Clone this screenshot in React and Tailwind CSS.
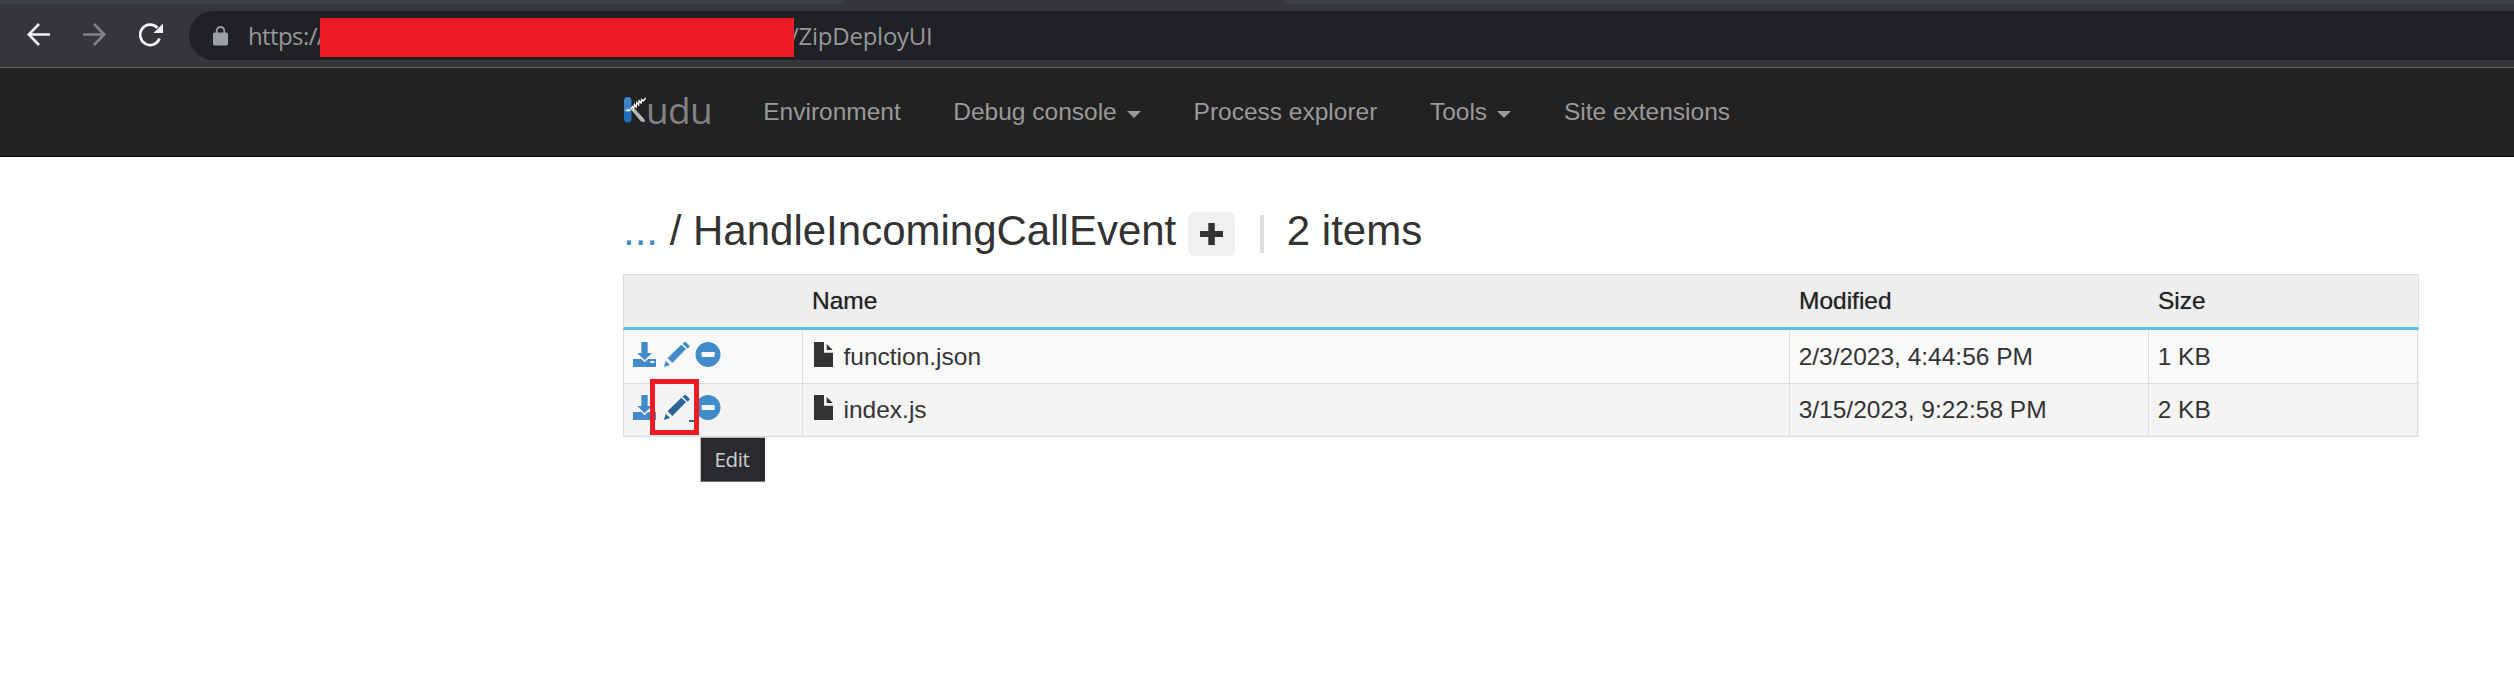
import React from "react";

const COLUMNS = "grid grid-cols-[180px_987px_359px_269px]";

function DownloadIcon() {
  return (
    <svg className="block h-[25px] w-[23px]" viewBox="0 0 69 75" fill="currentColor">
      <path d="M25 0h19v33h13L35 55 13 33h12z" />
      <path d="M0 51h25l10 10 10-10h24v24H0z" />
      <path d="M52 57h12v6H52z" fill="#f9f9f9" />
    </svg>
  );
}

function PencilIcon() {
  return (
    <svg className="block h-[25px] w-[26px]" viewBox="0 0 78 75" fill="currentColor">
      <path d="M0 75l5-19 13 13z" />
      <path d="M11 48L52 8l14 13-41 42z" />
      <path d="M56 5l4-4q3-2 6 0l9 9q3 3 0 6l-4 4z" />
    </svg>
  );
}

function MinusIcon() {
  return (
    <svg className="block h-[25px] w-[26px]" viewBox="0 0 76 75" fill="currentColor">
      <path fillRule="evenodd" d="M38 0a37.5 37.5 0 1 1 0 75a37.5 37.5 0 1 1 0-75zM19 30v15h39V30z" />
    </svg>
  );
}

function FileIcon() {
  return (
    <svg className="block h-[25px] w-[19px]" viewBox="0 0 57 75" fill="#333">
      <path d="M0 0h30v32h27v43H0z" />
      <path d="M38 6l18 18H38z" />
    </svg>
  );
}

function Logo() {
  return (
    <div className="flex h-[88px] w-[114px] shrink-0 items-start">
      <svg className="mt-[28px] block h-[27px] w-[24px] shrink-0" viewBox="0 0 24 27">
        <defs>
          <linearGradient id="handle" x1="0" y1="0" x2="0" y2="1">
            <stop offset="0.55" stopColor="#3b86c8" />
            <stop offset="0.55" stopColor="#1f70b8" />
          </linearGradient>
        </defs>
        <path d="M7.500 13l4-.5 9 9.700q1.500 1.500 1.500 3.800l-4-.6z" fill="#b5b6b8" />
        <rect x="1" y="1" width="7.500" height="25.500" rx="3.700" fill="url(#handle)" />
        <path d="M2.200 15.200q.3-1.200 1.600-1.200q.7-1.500 2-.7q1.500.2 2 1.900z" fill="#fff" />
        <path
          d="M7.500 13.500l2-3 1 2.400 1-4.600 1.600 2.700.7-4.600 1.800 2.500.5-4.200 2 2.300.6-3.500 1.700 1.500 2.200-3"
          fill="none"
          stroke="#fff"
          strokeWidth="1.300"
        />
      </svg>
      <span className="mt-[17px] -ml-px font-['Open_Sans',sans-serif] text-[37px] leading-[50px] tracking-[-0.7px] text-[#808285]">
        udu
      </span>
    </div>
  );
}

function NavItem({ label, caret }) {
  return (
    <div className="flex shrink-0 items-center px-[26.25px]">
      <span>{label}</span>
      {caret && (
        <svg className="mt-[3px] ml-[10.3px] block h-[7px] w-[14px]" viewBox="0 0 14 7" fill="#999">
          <path d="M0 0h14L7 7z" />
        </svg>
      )}
    </div>
  );
}

function BrowserBar() {
  return (
    <div className="flex h-[68px] flex-col border-b border-[#5f6062] bg-[#35363a]">
      <div className="flex h-1 shrink-0 justify-between">
        <div className="w-[845px] rounded-br-[6px] bg-[#3c4043]" />
        <div className="w-[1230px] rounded-bl-[6px] bg-[#3c4043]" />
      </div>
      <div className="mt-[7px] flex h-[49px] shrink-0">
        <div className="flex w-[189px] shrink-0 pt-3 pl-[27px]">
          <svg className="block h-[23px] w-[23px]" viewBox="0 0 23 23" fill="none" stroke="#f1f3f4" strokeWidth="2.600">
            <path d="M23 11.500H2M12 1L1.700 11.500L12 22" />
          </svg>
          <svg className="ml-[33px] block h-[23px] w-[23px]" viewBox="0 0 23 23" fill="none" stroke="#828387" strokeWidth="2.600">
            <path d="M0 11.500H21M11 1l10.300 10.500L11 22" />
          </svg>
          <svg className="ml-[33px] block h-[24px] w-[24px]" viewBox="0 0 24 24">
            <path d="M20.500 15.500A10 10.200 0 1 1 18.500 4.900" fill="none" stroke="#f1f3f4" strokeWidth="2.700" />
            <path d="M24 .5V10H14.500z" fill="#f1f3f4" />
          </svg>
        </div>
        <div className="flex flex-1 rounded-l-full bg-[#202124] font-['Open_Sans',sans-serif] text-[24px] leading-[33px] whitespace-nowrap text-[#969799]">
          <svg className="mt-[15px] ml-6 block h-5 w-[15px] shrink-0" viewBox="0 0 15 20">
            <path d="M3.700 8V4.800a3.800 3.800 0 0 1 7.600 0V8" fill="none" stroke="#9aa0a6" strokeWidth="1.800" />
            <rect y="6.500" width="15" height="13" rx="1.800" fill="#9aa0a6" />
          </svg>
          <div className="mt-2 ml-5 w-[72px] shrink-0 tracking-[-0.6px]">https://</div>
          <div className="relative mt-[7px] h-[39px] w-[474px] shrink-0 bg-[#ed1c24]" />
          <span className="mt-2 -ml-[4px] shrink-0 tracking-[-0.25px]">/ZipDeployUI</span>
        </div>
      </div>
    </div>
  );
}

function Row({ name, modified, size, editing }) {
  const cell = "border-r border-[#ddd] pl-[8.700px]";
  return (
    <div
      className={`${COLUMNS} border-b border-[#ddd] ${editing ? "h-[53px] bg-[#f4f4f4] leading-[51px]" : "h-[54px] bg-[#f9f9f9] leading-[53px]"}`}
    >
      <div className={`relative flex border-x border-[#ddd] pl-[9px] text-[#428bca] ${editing ? "pt-[11px]" : "pt-3"}`}>
        <DownloadIcon />
        <div className={`ml-2 ${editing ? "text-[#2a6496]" : ""}`}>
          <PencilIcon />
        </div>
        <div className="ml-[5px]">
          <MinusIcon />
        </div>
        {editing && (
          <>
            <div className="absolute top-[-5px] left-[26px] h-[56px] w-[49px] border-[5px] border-[#ed1c24]" />
            <div className="absolute top-[36px] left-[65px] h-[2px] w-[5px] bg-[#2a6496]" />
            <div className="absolute top-[53px] left-[76px] z-10 h-[45px] w-[65px] border-t border-b border-l border-t-[#bbb] border-b-[#777] border-l-[#bbb] bg-[#292a2d] pr-[2px] text-center font-['Open_Sans',sans-serif] text-[20.500px] leading-[43px] tracking-[-0.4px] text-[#cfd0d1]">
              Edit
            </div>
          </>
        )}
      </div>
      <div className="flex border-r border-[#ddd] pl-[11px]">
        <div className={editing ? "pt-[11px]" : "pt-3"}>
          <FileIcon />
        </div>
        <span className="ml-[10.500px]">{name}</span>
      </div>
      <div className={cell}>{modified}</div>
      <div className={cell}>{size}</div>
    </div>
  );
}

export default function App() {
  return (
    <div className="h-[673px] w-[2514px] overflow-hidden bg-white font-['Liberation_Sans',Arial,sans-serif] text-[24.500px] text-[#333]">
      <BrowserBar />
      <nav className="flex h-[89px] border-b border-[#080808] bg-[#222] pl-[623px] text-[#999]">
        <Logo />
        <div className="flex pt-px">
          <NavItem label="Environment" />
          <NavItem label="Debug console" caret />
          <NavItem label="Process explorer" />
          <NavItem label="Tools" caret />
          <NavItem label="Site extensions" />
        </div>
      </nav>
      <main className="pl-[623px]">
        <h1 className="flex h-[117px] pt-[51px] text-[42px] leading-[46px] whitespace-pre">
          <span className="text-[#428bca]">...</span>
          <span> / HandleIncomingCallEvent</span>
          <span className="mt-1 ml-[12px] flex h-[44px] w-[47px] items-center justify-center rounded-[7px] bg-[#efefef]">
            <svg className="block h-[22px] w-[23px]" viewBox="0 0 23 22" fill="#333">
              <path d="M8.300 0h6.500v8H23v6h-8.200v8H8.300v-8H0V8h8.300z" />
            </svg>
          </span>
          <span className="mt-[7px] ml-[25px] h-[38px] w-[3.500px] bg-[#ddd]" />
          <span className="ml-[23px]">2 items</span>
        </h1>
        <div className="w-[1796px]">
          <div
            className={`${COLUMNS} h-[56px] border-x border-t border-b-[3px] border-x-[#ddd] border-t-[#ddd] border-b-[#5bc0de] bg-[#eee] leading-[52px] text-[#222] [text-shadow:0_0_1px_#2228]`}
          >
            <div />
            <div className="pl-2">Name</div>
            <div className="pl-2">Modified</div>
            <div className="pl-2">Size</div>
          </div>
          <Row name="function.json" modified="2/3/2023, 4:44:56 PM" size="1 KB" />
          <Row name="index.js" modified="3/15/2023, 9:22:58 PM" size="2 KB" editing />
        </div>
      </main>
    </div>
  );
}
